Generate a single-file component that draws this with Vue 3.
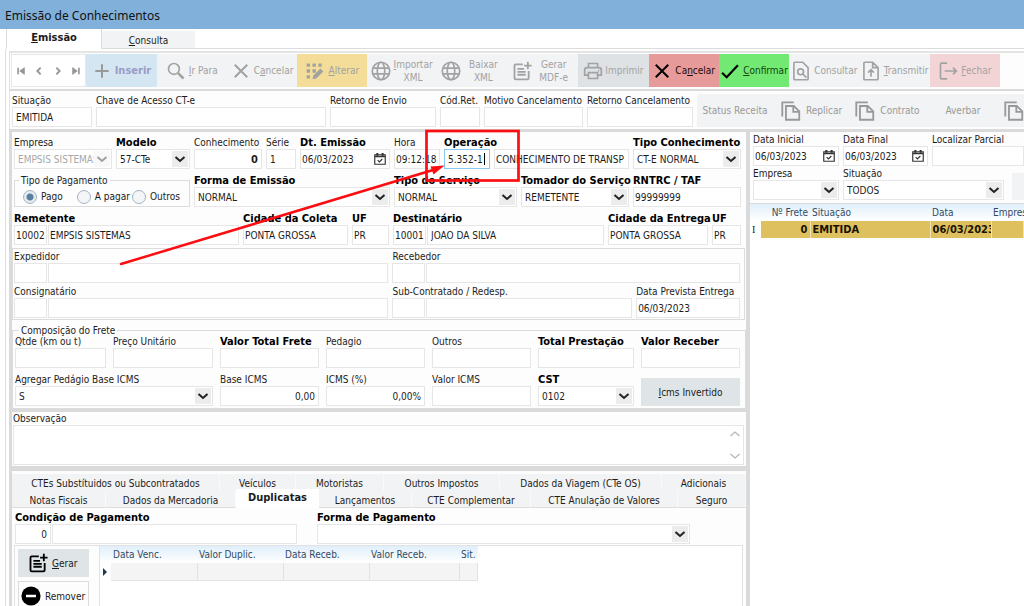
<script setup>
import { h } from 'vue'

const glyphs = {
  first: '<path d="M5 4v16" stroke-width="4"/><path d="M20 4L9 12l11 8z" fill="currentColor"/>',
  prev: '<path d="M16 4l-8 8 8 8" stroke-width="4.500"/>',
  next: '<path d="M8 4l8 8-8 8" stroke-width="4.500"/>',
  last: '<path d="M19 4v16" stroke-width="4"/><path d="M4 4l11 8-11 8z" fill="currentColor"/>',
  plus: '<path d="M12 4v16M4 12h16" stroke-width="2.400"/>',
  search: '<circle cx="9.5" cy="9.5" r="6.500"/><path d="M14.500 14.500L21 21" stroke-width="3"/>',
  close: '<path d="M4.500 4.500l15 15M19.500 4.500l-15 15" stroke-width="2.400"/>',
  check: '<path d="M2.500 14l5.500 5.500L21.500 5" stroke-width="2.600"/>',
  edit: '<g fill="currentColor" stroke="none"><path d="M2 3h4v4H2zM9 3h4v4H9zM16 3h4v4h-4zM2 10h4v4H2zM9 10h4v4H9zM2 17h4v4H2zM18.500 9l3.500 3.500-8.500 8.500-4.500 1 1-4.500z"/></g>',
  globe: '<circle cx="12" cy="12" r="10.500"/><ellipse cx="12" cy="12" rx="4.500" ry="10.500"/><path d="M2.500 8.500h19M2.500 15.500h19"/>',
  docPlus: '<path d="M13 4H4.500Q3 4 3 5.500v15Q3 22 4.500 22h14q1.500 0 1.500-1.500V12M6.500 9.500h8M6.500 13h10M6.500 16.500h10M19 1v9M14.500 5.500h9" stroke-width="2.200"/>',
  printer: '<path d="M6.500 8V3h11v5M6.500 17H2v-6q0-3 3-3h14q3 0 3 3v6h-4.500M6.500 14h11v7h-11z"/><path d="M18 11.500h1.500"/>',
  fileSearch: '<path d="M14 1.500H4.500Q3.500 1.500 3.500 2.500v19q0 1 1 1h15q1 0 1-1V8z"/><circle cx="11.500" cy="13" r="3.500"/><path d="M14 15.500l4.500 4.500"/>',
  fileUp: '<path d="M14 1.500H4.500Q3.500 1.500 3.500 2.500v19q0 1 1 1h15q1 0 1-1V8zM14 2v6h6M12 19v-8M8.500 14l3.500-3.500 3.500 3.500"/>',
  exit: '<path d="M11 2.500H4.500Q3 2.500 3 4v16q0 1.500 1.500 1.500H11M8 12h14M18 8l4 4-4 4"/>',
  copy: '<path d="M2.500 18V2.500H15M6.500 6.500H15l6 6v9H6.500zM14.500 7v6H21"/>',
  minus: '<circle cx="12" cy="12" r="11.500" fill="currentColor" stroke="none"/><path d="M6 12h12" stroke="#fff" stroke-width="3"/>',
  chevron: '<path d="M3 8l9 8 9-8" stroke-width="4"/>',
  thin: '<path d="M3 8l9 8 9-8" stroke-width="2.500"/>',
  up: '<path d="M3 16l9-8 9 8" stroke-width="2.500"/>',
  calendar: '<path d="M3 5h18v16H3zM3 8h18M8 14l3 3 5-5"/><path d="M7.500 1.500v5M16.500 1.500v5" stroke-width="3.500"/>'
}

const Icon = ({ name }) =>
  h('svg', { class: ['icon', 'icon-' + name], viewBox: '0 0 24 24', 'aria-hidden': 'true', innerHTML: glyphs[name] })
Icon.props = ['name']

const Field = (p) => {
  const label = p.label
    ? h('label', { for: p.id, class: ['caption', { bold: p.bold }] }, p.label)
    : h('span', { class: 'caption' })
  const aria = p.label ? undefined : p.hint
  const control = p.kind === 'select'
    ? h('select', { id: p.id, disabled: p.off, 'aria-label': aria }, [h('option', p.value || '')])
    : h('input', { id: p.id, type: 'text', value: p.value || '', 'aria-label': aria })
  const extra = p.kind === 'select'
    ? h('span', { class: 'drop' }, [h(Icon, { name: 'chevron' })])
    : p.kind === 'date'
      ? h('button', { type: 'button', class: 'pick', 'aria-label': 'Abrir calendário' }, [h(Icon, { name: 'calendar' })])
      : null
  return h('div', { class: ['field', p.look, { off: p.off }] }, [label, h('div', { class: 'box' }, [control, extra])])
}
Field.props = { id: String, label: String, hint: String, bold: Boolean, kind: String, value: String, look: String, off: Boolean }

const tools = [
  { icon: 'plus', text: ['', 'Inserir'], tone: 'insert' },
  { icon: 'search', text: ['I', 'r Para'] },
  { icon: 'close', text: ['', 'C', 'a', 'ncelar'] },
  { icon: 'edit', text: ['A', 'lterar'], tone: 'alter' },
  { icon: 'globe', text: ['I', 'mportar XML'], two: true },
  { icon: 'globe', text: ['', 'Baixar XML'], two: true },
  { icon: 'docPlus', text: ['', 'Gerar MDF-e'], two: true },
  { icon: 'printer', text: ['', 'Imprimir'], tone: 'print' },
  { icon: 'close', text: ['', 'Ca', 'n', 'celar'], tone: 'cancel' },
  { icon: 'check', text: ['C', 'onfirmar'], tone: 'confirm' },
  { icon: 'fileSearch', text: ['', 'Consultar'] },
  { icon: 'fileUp', text: ['T', 'ransmitir'] },
  { icon: 'exit', text: ['F', 'echar'], tone: 'exit' }
]
const nav = [['first', 'Primeiro'], ['prev', 'Anterior'], ['next', 'Próximo'], ['last', 'Último']]
const upperTabs = ['CTEs Substítuidos ou Subcontratados', 'Veículos', 'Motoristas', 'Outros Impostos', 'Dados da Viagem (CTe OS)', 'Adicionais']
const lowerTabs = ['Notas Fiscais', 'Dados da Mercadoria', 'Duplicatas', 'Lançamentos', 'CTE Complementar', 'CTE Anulação de Valores', 'Seguro']
</script>

<template>
  <div class="window">
    <header class="title">Emissão de Conhecimentos</header>
    <nav class="pages" role="tablist">
      <button type="button" role="tab" aria-selected="true" class="page on"><u>E</u>missão</button>
      <button type="button" role="tab" aria-selected="false" class="page"><u>C</u>onsulta</button>
      <span class="rule"></span>
    </nav>

    <div class="body">
      <div class="toolbar">
        <div class="nav">
          <button v-for="n in nav" :key="n[0]" type="button" :aria-label="n[1]"><Icon :name="n[0]" /></button>
        </div>
        <button v-for="(t, i) in tools" :key="i" type="button" class="tool" :class="[t.tone, { two: t.two }]">
          <Icon :name="t.icon" />
          <span v-if="t.text.length === 4">{{ t.text[1] }}<u>{{ t.text[2] }}</u>{{ t.text[3] }}</span>
          <span v-else><u>{{ t.text[0] }}</u>{{ t.text[1] }}</span>
        </button>
      </div>

      <div class="status">
        <Field id="situacao" label="Situação" value="EMITIDA" />
        <Field id="chave" label="Chave de Acesso CT-e" />
        <Field id="retorno" label="Retorno de Envio" />
        <Field id="codret" label="Cód.Ret." />
        <Field id="motivo" label="Motivo Cancelamento" />
        <Field id="retcanc" label="Retorno Cancelamento" />
        <div class="actions">
          <button type="button">Status Receita</button>
          <button type="button"><Icon name="copy" />Replicar</button>
          <button type="button"><Icon name="copy" />Contrato</button>
          <button type="button">Averbar</button>
          <button type="button" class="cut" aria-label="Copiar"><Icon name="copy" /></button>
        </div>
      </div>

      <main class="split">
        <section class="editor">
          <div class="rows">
            <div class="row row-a">
              <Field id="empresa" label="Empresa" kind="select" value="EMPSIS SISTEMAS" off />
              <Field id="modelo" label="Modelo" bold kind="select" value="57-CTe" />
              <Field id="conhec" label="Conhecimento" value="0" look="end strong" />
              <Field id="serie" label="Série" value="1" />
              <Field id="emissao" label="Dt. Emissão" bold kind="date" value="06/03/2023" look="tight" />
              <Field id="hora" label="Hora" value="09:12:18" look="tight" />
              <Field id="operacao" label="Operação" bold value="5.352-1" look="focus" />
              <Field id="opdesc" hint="Descrição da operação" value="CONHECIMENTO DE TRANSP" look="tight" />
              <Field id="tipoconh" label="Tipo Conhecimento" bold kind="select" value="CT-E NORMAL" />
            </div>
            <div class="row row-b">
              <fieldset class="pay">
                <legend>Tipo de Pagamento</legend>
                <label><input type="radio" name="pay" checked />Pago</label>
                <label><input type="radio" name="pay" />A pagar</label>
                <label><input type="radio" name="pay" />Outros</label>
              </fieldset>
              <Field id="forma" label="Forma de Emissão" bold kind="select" value="NORMAL" />
              <Field id="servico" label="Tipo do Serviço" bold kind="select" value="NORMAL" />
              <Field id="tomador" label="Tomador do Serviço" bold kind="select" value="REMETENTE" />
              <Field id="rntrc" label="RNTRC / TAF" bold value="99999999" look="tight" />
            </div>
            <div class="row row-c">
              <div class="pair">
                <Field id="rem" label="Remetente" bold value="10002" look="tight" />
                <Field id="remnome" hint="Nome do remetente" value="EMPSIS SISTEMAS" look="tight" />
              </div>
              <Field id="coleta" label="Cidade da Coleta" bold value="PONTA GROSSA" look="tight" />
              <Field id="uf1" label="UF" bold value="PR" look="tight" />
              <div class="pair">
                <Field id="dest" label="Destinatário" bold value="10001" look="tight" />
                <Field id="destnome" hint="Nome do destinatário" value="JOAO DA SILVA" />
              </div>
              <Field id="entrega" label="Cidade da Entrega" bold value="PONTA GROSSA" look="tight" />
              <Field id="uf2" label="UF" bold value="PR" look="tight" />
            </div>
          </div>

          <div class="parties">
            <div class="row row-d">
              <div class="pair">
                <Field id="exp" label="Expedidor" />
                <Field id="expnome" hint="Nome do expedidor" />
              </div>
              <div class="pair">
                <Field id="rec" label="Recebedor" />
                <Field id="recnome" hint="Nome do recebedor" />
              </div>
            </div>
            <div class="row row-e">
              <div class="pair">
                <Field id="cons" label="Consignatário" />
                <Field id="consnome" hint="Nome do consignatário" />
              </div>
              <div class="pair">
                <Field id="sub" label="Sub-Contratado / Redesp." />
                <Field id="subnome" hint="Nome do subcontratado" />
              </div>
              <Field id="prevista" label="Data Prevista Entrega" value="06/03/2023" look="tight" />
            </div>
          </div>

          <fieldset class="freight">
            <legend>Composição do Frete</legend>
            <div class="freight-grid">
              <Field id="qtde" label="Qtde (km ou t)" />
              <Field id="preco" label="Preço Unitário" />
              <Field id="total" label="Valor Total Frete" bold />
              <Field id="pedagio" label="Pedagio" />
              <Field id="outros" label="Outros" />
              <Field id="prest" label="Total Prestação" bold />
              <Field id="receber" label="Valor Receber" bold />
              <Field id="agregar" label="Agregar Pedágio Base ICMS" kind="select" value="S" look="wide" />
              <Field id="baseicms" label="Base ICMS" value="0,00" look="end" />
              <Field id="icms" label="ICMS (%)" value="0,00%" look="end" />
              <Field id="valoricms" label="Valor ICMS" />
              <Field id="cst" label="CST" bold kind="select" value="0102" />
              <button type="button" class="invert"><u>I</u>cms Invertido</button>
            </div>
          </fieldset>

          <div class="notes">
            <label for="obs">Observação</label>
            <div class="memo">
              <textarea id="obs"></textarea>
              <span class="arrows"><Icon name="up" /><Icon name="thin" /></span>
            </div>
          </div>

          <div class="sheets">
            <div class="tabs upper" role="tablist">
              <button v-for="t in upperTabs" :key="t" type="button" role="tab" aria-selected="false">{{ t }}</button>
            </div>
            <div class="tabs lower" role="tablist">
              <button v-for="t in lowerTabs" :key="t" type="button" role="tab" :aria-selected="t === 'Duplicatas'" :class="{ on: t === 'Duplicatas' }">{{ t }}</button>
            </div>
            <div class="terms">
              <div class="pair">
                <Field id="cond" label="Condição de Pagamento" bold value="0" look="end" />
                <Field id="condnome" hint="Descrição da condição" />
              </div>
              <Field id="formapag" label="Forma de Pagamento" bold kind="select" />
            </div>
            <div class="dups">
              <div class="side">
                <button type="button" class="gen"><Icon name="docPlus" /><span><u>G</u>erar</span></button>
                <button type="button" class="rem"><Icon name="minus" />Remover</button>
              </div>
              <div class="list">
                <table class="grid dup">
                  <thead>
                    <tr><th></th><th>Data Venc.</th><th>Valor Duplic.</th><th>Data Receb.</th><th>Valor Receb.</th><th>Sit.</th></tr>
                  </thead>
                  <tbody>
                    <tr><td><span class="marker"></span></td><td></td><td></td><td></td><td></td><td></td></tr>
                  </tbody>
                </table>
              </div>
            </div>
          </div>

          <svg class="callout" width="520" height="150" viewBox="0 0 520 150" aria-hidden="true">
            <rect x="414.500" y="2" width="92" height="49.500" fill="none" stroke="#fb0d12" stroke-width="2.700" />
            <path d="M109 135L421 41" stroke="#fb0d12" stroke-width="2.500" stroke-linecap="round" />
            <path d="M432.500 36.500L418.500 37.500l3 8z" fill="#fb0d12" />
          </svg>
        </section>

        <section class="records">
          <div class="filters">
            <div class="row row-f">
              <Field id="ini" label="Data Inicial" kind="date" value="06/03/2023" look="tight" />
              <Field id="fim" label="Data Final" kind="date" value="06/03/2023" look="tight" />
              <Field id="local" label="Localizar Parcial" />
            </div>
            <div class="row row-g">
              <Field id="femp" label="Empresa" kind="select" />
              <Field id="fsit" label="Situação" kind="select" value="TODOS" />
              <button type="button" class="find" aria-label="Localizar"></button>
            </div>
          </div>
          <table class="grid docs">
            <thead>
              <tr><th></th><th class="num">Nº Frete</th><th>Situação</th><th>Data</th><th>Empresa</th></tr>
            </thead>
            <tbody>
              <tr><td class="cursor">I</td><td class="num">0</td><td>EMITIDA</td><td>06/03/2023</td><td></td></tr>
            </tbody>
          </table>
        </section>
      </main>
    </div>
  </div>
</template>

<style>
body {
  margin: 0;
  background: #fff;
}
</style>

<style scoped>
.window,
.window :deep(*) {
  box-sizing: border-box;
}
.window {
  height: 100vh;
  overflow: hidden;
  display: flex;
  flex-direction: column;
  background: #fff;
  color: #1c1c1c;
  font: 10px/13px "DejaVu Sans Condensed", "Noto Sans", sans-serif;
}
.window :deep(button),
.window :deep(input),
.window :deep(select),
.window :deep(textarea) {
  font: inherit;
  color: inherit;
  margin: 0;
  padding: 0;
  border: 0;
  border-radius: 0;
  background: none;
  outline: 0;
  white-space: nowrap;
}
.window :deep(.icon) {
  width: 20px;
  height: 20px;
  flex: none;
  fill: none;
  stroke: currentColor;
  stroke-width: 2;
}
.title {
  height: 29px;
  flex: none;
  padding: 2px 5px 0;
  background: #81b0da;
  color: #111;
  font: 12px/27px "Noto Sans", sans-serif;
}
.pages {
  display: flex;
  align-items: flex-end;
  height: 20px;
  flex: none;
  padding-left: 6px;
}
.window .page {
  width: 93px;
  height: 18px;
  padding-top: 2px;
  background: #f2f3f4;
  border-bottom: 1px solid #dcdcdc;
}
.window .page.on {
  width: 96px;
  height: 20px;
  padding: 0 0 4px;
  background: #fff;
  border: 0;
  border-right: 1px solid #dcdcdc;
  border-left: 1px solid #dcdcdc;
}
.rule {
  flex: 1;
  border-bottom: 1px solid #dcdcdc;
}
.body {
  flex: 1;
  min-height: 0;
  display: flex;
  flex-direction: column;
  margin-left: 5px;
  padding: 2px 0 0 3px;
  border-left: 1px solid #dedede;
}
.toolbar {
  display: grid;
  grid-template-columns: minmax(0, 75fr) repeat(13, minmax(0, 70fr)) 24px;
  height: 40px;
  flex: none;
  padding: 1px 0 2px 1px;
  border-top: 2px solid #e4e4e4;
  border-bottom: 2px solid #dadada;
  border-left: 1px solid #e4e4e4;
  background: #fdfdfd;
}
.nav {
  display: flex;
  justify-content: space-around;
  align-items: center;
  border: 1px solid #e8e8e8;
  background: #fff;
  color: #979797;
}
.nav button {
  display: flex;
}
.nav :deep(.icon) {
  width: 10px;
  height: 10px;
}
.window .tool {
  display: flex;
  align-items: center;
  justify-content: center;
  gap: 3px;
  background: #f1f3f5;
  color: #a2a2a2;
}
.window .tool.two {
  gap: 1px;
}
.two span {
  white-space: normal;
  width: 42px;
}
.window .insert {
  background: #d5e6f3;
  color: #9a9cc8;
}
.insert :deep(.icon) {
  color: #999;
}
.window .alter {
  background: #f4dc99;
}
.window .print {
  background: #dee2e5;
  gap: 2px;
}
.window .cancel {
  background: #e79a9a;
  color: #1c0c0c;
}
.window .confirm {
  background: #72e972;
  color: #114511;
}
.cancel :deep(.icon),
.confirm :deep(.icon) {
  color: #000;
}
.window .exit {
  background: #f2d4d6;
}
.status {
  display: grid;
  grid-template-columns: minmax(0, 80fr) minmax(0, 230fr) minmax(0, 106fr) minmax(0, 40fr) minmax(0, 99fr) minmax(0, 106fr) minmax(0, 327fr);
  gap: 4px;
  flex: none;
  padding: 3px 0 2px 2px;
  border-left: 1px solid #e4e4e4;
  background: #fdfdfd;
}
.actions {
  display: grid;
  grid-template-columns: repeat(4, minmax(0, 76fr)) minmax(0, 23fr);
  overflow: hidden;
  background: #f1f3f5;
  color: #999;
}
.actions button {
  display: flex;
  align-items: center;
  justify-content: center;
  gap: 4px;
}
.actions :deep(.icon) {
  width: 22px;
  height: 22px;
}
.window .cut {
  justify-content: flex-start;
  padding-left: 2px;
}
.window :deep(.field) {
  min-width: 0;
}
.window :deep(.caption) {
  display: block;
  height: 13px;
  white-space: nowrap;
}
.window :deep(.bold),
.window :deep(.strong input),
.window .page.on,
.window .insert,
.window .lower .on,
.docs td:not(:first-child) {
  font-size: 11px;
  font-weight: bold;
}
.window :deep(.bold) {
  color: #000;
}
.window :deep(.box) {
  display: flex;
  position: relative;
  height: 20px;
  border: 1px solid #e6e6e6;
  background: #fff;
}
.window :deep(.box input),
.window :deep(.box select) {
  flex: 1;
  width: 100%;
  min-width: 0;
  padding: 0 3px;
  appearance: none;
}
.window :deep(.box select) {
  padding-right: 17px;
}
.window :deep(.tight input) {
  padding: 0 1px;
}
.window :deep(.end input) {
  text-align: right;
}
.window :deep(.off select) {
  color: #a8a8a8;
  opacity: 1;
}
.window :deep(.focus .box) {
  border-color: #8cc6f2;
}
.window :deep(.focus .box)::after {
  content: "";
  position: absolute;
  top: 3px;
  left: 39px;
  width: 1px;
  height: 12px;
  background: #000;
}
.window :deep(.drop) {
  position: absolute;
  top: 1px;
  right: 1px;
  width: 16px;
  height: 16px;
  display: grid;
  place-items: center;
  background: #ececec;
  color: #222;
  pointer-events: none;
}
.window :deep(.drop .icon) {
  width: 12px;
  height: 12px;
}
.window :deep(.off .drop) {
  color: #a0a0a0;
  background: #f8f8f8;
}
.window :deep(.pick) {
  flex: none;
  display: flex;
  align-items: center;
  padding-right: 2px;
  color: #333;
}
.window :deep(.pick .icon) {
  width: 14px;
  height: 14px;
}
.split {
  flex: 1;
  min-height: 0;
  display: grid;
  grid-template-columns: minmax(0, 741fr) minmax(0, 274fr);
  border-top: 3px solid #dadada;
}
.editor {
  position: relative;
  min-width: 0;
  border-left: 3px solid #dadada;
  border-right: 4px solid #dadada;
  background: #fdfdfd;
}
.rows {
  display: grid;
  gap: 5px;
  padding: 4px 5px 3px 2px;
}
.row {
  display: grid;
  gap: 4px;
}
.row-a {
  grid-template-columns: minmax(0, 98fr) minmax(0, 74fr) minmax(0, 68fr) minmax(0, 30fr) minmax(0, 90fr) minmax(0, 46fr) minmax(0, 46fr) minmax(0, 135fr) minmax(0, 108fr);
}
.row-b {
  grid-template-columns: minmax(0, 176fr) minmax(0, 196fr) minmax(0, 123fr) minmax(0, 108fr) minmax(0, 108fr);
}
.row-c {
  grid-template-columns: minmax(0, 225fr) minmax(0, 105fr) minmax(0, 37fr) minmax(0, 211fr) minmax(0, 100fr) minmax(0, 29fr);
}
.row-d {
  grid-template-columns: minmax(0, 375fr) minmax(0, 348fr);
}
.row-e {
  grid-template-columns: minmax(0, 375fr) minmax(0, 240fr) minmax(0, 104fr);
}
.row-f {
  grid-template-columns: minmax(0, 86fr) minmax(0, 85fr) minmax(0, 92fr);
}
.row-g {
  grid-template-columns: minmax(0, 86fr) minmax(0, 161fr) minmax(0, 16fr);
}
.pair {
  display: grid;
  grid-template-columns: 33px minmax(0, 1fr);
  gap: 1px;
}
fieldset {
  min-width: 0;
  margin: 0;
  border: 1px solid #dcdcdc;
}
legend {
  padding: 0 2px;
  height: 13px;
}
.pay {
  display: flex;
  gap: 2px;
  padding: 0 4px;
}
.pay label {
  display: flex;
  align-items: center;
  gap: 4px;
  white-space: nowrap;
}
.pay label:nth-of-type(1) {
  margin: 0 12px 0 4px;
}
.window .pay input {
  appearance: none;
  width: 14px;
  height: 14px;
  border: 1px solid #a5b4c1;
  border-radius: 50%;
  background: #f4f5f6;
}
.window .pay input:checked {
  background: radial-gradient(circle, #5b7f9f 0 3px, #e3ebf2 4px);
}
.parties {
  display: grid;
  gap: 2px;
  padding: 1px 4px 1px 1px;
  border: 1px solid #dcdcdc;
  margin-right: 1px;
}
.freight {
  margin-top: 4px;
  padding: 0 5px 2px 2px;
}
.freight legend {
  margin-left: 4px;
}
.freight-grid {
  display: grid;
  grid-template-columns: minmax(0, 91fr) minmax(0, 100fr) minmax(0, 99fr) minmax(0, 99fr) minmax(0, 99fr) minmax(0, 96fr) minmax(0, 99fr);
  gap: 5px 7px;
  margin-top: -2px;
}
.freight-grid :deep(.wide) {
  grid-column: span 2;
}
.window .invert {
  align-self: end;
  height: 28px;
  background: #dfe4e7;
}
.notes {
  padding: 0 2px 1px 1px;
  border-top: 3px solid #dadada;
  border-bottom: 5px solid #dadada;
}
.notes label {
  display: block;
}
.memo {
  position: relative;
  height: 40px;
  border: 1px solid #e6e6e6;
  background: #fff;
}
.window .memo textarea {
  display: block;
  width: 100%;
  height: 100%;
  resize: none;
  white-space: pre-wrap;
}
.arrows {
  position: absolute;
  inset: 2px 2px 2px auto;
  display: flex;
  flex-direction: column;
  justify-content: space-between;
  color: #b5b5b5;
  pointer-events: none;
}
.arrows :deep(.icon) {
  width: 12px;
  height: 12px;
}
.sheets {
  padding-top: 3px;
}
.tabs {
  display: grid;
  height: 17px;
}
.upper {
  grid-template-columns: minmax(0, 208fr) minmax(0, 76fr) minmax(0, 88fr) minmax(0, 116fr) minmax(0, 162fr) minmax(0, 84fr);
}
.lower {
  grid-template-columns: minmax(0, 94fr) minmax(0, 130fr) minmax(0, 83fr) minmax(0, 93fr) minmax(0, 119fr) minmax(0, 147fr) minmax(0, 68fr);
}
.window .tabs button {
  padding-top: 2px;
  background: #f2f3f4;
  border-right: 1px solid #fafafa;
}
.window .lower button {
  border-bottom: 1px solid #dcdcdc;
}
.window .lower .on {
  margin-top: -2px;
  padding: 0 0 2px;
  background: #fff;
  border: 0;
}
.terms {
  display: grid;
  grid-template-columns: minmax(0, 282fr) minmax(0, 373fr);
  gap: 20px;
  padding: 3px 56px 1px 3px;
}
.terms .pair {
  grid-template-columns: 36px minmax(0, 1fr);
}
.dups {
  display: flex;
  height: 120px;
  margin: 0 3px 0 2px;
}
.side {
  width: 86px;
  flex: none;
  padding: 3px;
  border: 1px solid #e2e2e2;
}
.side button {
  display: flex;
  align-items: center;
  gap: 4px;
  width: 71px;
  height: 28px;
}
.window .gen {
  padding-left: 10px;
  background: #dfe4e7;
}
.window .rem {
  height: 30px;
  margin-top: 4px;
  padding-left: 2px;
  border: 1px solid #dcdcdc;
}
.side :deep(.icon) {
  color: #000;
}
.list {
  flex: 1;
  min-width: 0;
  border: 1px solid #e2e2e2;
  border-left: 0;
  background: #fff;
}
.grid {
  table-layout: fixed;
  border-collapse: collapse;
}
.grid th,
.grid td {
  height: 17px;
  padding: 0 2px;
  text-align: left;
  white-space: nowrap;
  overflow: hidden;
  line-height: 13px;
}
.grid thead {
  background: linear-gradient(#e0effa, #fff);
  color: #344a63;
}
.grid th {
  font-weight: normal;
}
.dup {
  width: 378px;
}
.dup th:nth-child(1) {
  width: 11px;
}
.dup th:nth-child(-n+4):not(:first-child) {
  width: 86px;
}
.dup th:nth-child(5) {
  width: 90px;
}
.dup td:not(:first-child) {
  background: #f4f4f4;
  border-right: 1px solid #e2e2e2;
  border-bottom: 1px solid #e2e2e2;
}
.marker {
  display: block;
  width: 0;
  border: 4px solid transparent;
  border-left-color: #1e3a52;
  border-right: 0;
  margin-left: 1px;
}
.records {
  min-width: 0;
  overflow: hidden;
}
.filters {
  display: grid;
  gap: 1px;
  padding: 1px 0 3px 3px;
  border-bottom: 1px solid #dadada;
  background: #fdfdfd;
}
.window .find {
  margin: 6px 0 0 4px;
  background: #f1f3f5;
}
.docs {
  width: 100%;
}
.docs th:nth-child(1) {
  width: 11px;
}
.docs th:nth-child(2) {
  width: 49px;
}
.docs th:nth-child(3) {
  width: 120px;
}
.docs th:nth-child(4) {
  width: 61px;
}
.docs td:not(:first-child) {
  background: #dfc05e;
  border-right: 1px solid #f1e2b2;
  color: #181100;
}
.grid .num {
  text-align: right;
}
.cursor {
  font-family: "Liberation Serif", serif;
}
.callout {
  position: absolute;
  top: -3px;
  left: 0;
  pointer-events: none;
}
</style>
